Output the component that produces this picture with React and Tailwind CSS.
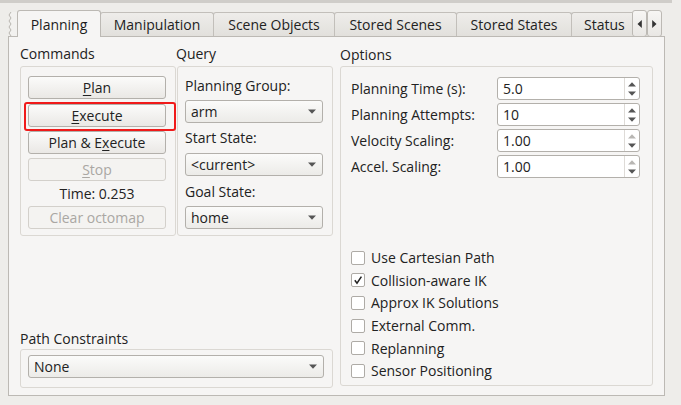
import React from "react";

const Btn = ({ children, disabled, className = "" }) => (
  <div
    className={`h-[23px] w-[138px] flex items-center justify-center rounded-[3px] border text-[14px] ${
      disabled
        ? "border-[#d3d0cb] bg-[#f4f3f1] text-[#aaa7a3]"
        : "border-[#b3b0ab] bg-gradient-to-b from-[#fbfbfa] to-[#eae8e5] text-[#222]"
    } ${className}`}
  >
    {children}
  </div>
);

const Arrow = ({ color = "#555" }) => (
  <svg width="8" height="5" viewBox="0 0 8 5">
    <path d="M0 0.5 H8 L4 4.8 Z" fill={color} />
  </svg>
);

const Combo = ({ value, className = "" }) => (
  <div
    className={`h-[23px] flex items-center justify-between rounded-[3px] border border-[#b3b0ab] bg-gradient-to-b from-[#fbfbfa] to-[#ecebe8] pl-[5px] pr-[6px] text-[14px] text-[#222] ${className}`}
  >
    <span>{value}</span>
    <Arrow />
  </div>
);

const Spin = ({ value, upDisabled }) => (
  <div className="h-[23px] w-[143px] flex rounded-[3px] border border-[#b3b0ab] bg-white">
    <div className="flex-1 pl-[5px] flex items-center text-[14px] text-[#222]">{value}</div>
    <div className="w-[15px] border-l border-[#dedbd7] flex flex-col items-center justify-center gap-[4px]">
      <svg width="8" height="5" viewBox="0 0 8 5">
        <path d="M0 4.5 H8 L4 0.2 Z" fill={upDisabled ? "#b8b6b3" : "#555"} />
      </svg>
      <svg width="8" height="5" viewBox="0 0 8 5">
        <path d="M0 0.5 H8 L4 4.8 Z" fill="#555" />
      </svg>
    </div>
  </div>
);

const Check = ({ label, checked }) => (
  <div className="h-[22.6px] flex items-center gap-[6px]">
    <div className="w-[14px] h-[14px] rounded-[2px] border border-[#aeaba6] bg-white flex items-center justify-center">
      {checked && (
        <svg width="10" height="10" viewBox="0 0 10 10">
          <path d="M1.8 5.2 L4 8.2 L8.4 1.6" stroke="#222" strokeWidth="1.5" fill="none" />
        </svg>
      )}
    </div>
    <span className="text-[14px] text-[#222]">{label}</span>
  </div>
);

const Tab = ({ children, w }) => (
  <div
    className={`${w} h-[24px] -ml-px flex items-center justify-center border border-b-0 border-[#c2bfba] rounded-t-[3px] bg-gradient-to-b from-[#eeedea] to-[#e2e0dc] text-[14px] text-[#222]`}
  >
    {children}
  </div>
);

export default function App() {
  return (
    <div className="w-[681px] h-[405px] bg-[#eeedea] overflow-hidden font-['Open_Sans',sans-serif] text-[#222] relative">
      <div className="h-[3px] w-[672px] bg-[#cfcdc9]" />
      <div className="h-[7px]" />
      {/* tab bar */}
      <div className="ml-[8px] h-[26px] flex items-end">
        <div className="w-[9px] h-[26px] flex items-end">
          <svg width="9" height="26" viewBox="0 0 9 26">
            <path d="M3 2 L1 5 L3 8 L1 11 L3 14 L1 17 L3 20 L1 23 L3 26 L9 26 L9 2 Z" fill="#f2f1ef" />
            <polyline points="3,2 1,5 3,8 1,11 3,14 1,17 3,20 1,23 3,26" stroke="#b9b6b1" strokeWidth="1" fill="none" />
          </svg>
        </div>
        <div className="relative z-10 w-[84px] h-[27px] -mb-px flex items-center justify-center border border-b-0 border-[#bcb9b4] rounded-t-[3px] bg-[#f6f5f4] text-[14px] text-[#1c1c1c]">
          Planning
        </div>
        <Tab w="w-[114px]">Manipulation</Tab>
        <Tab w="w-[122px]">Scene Objects</Tab>
        <Tab w="w-[123px]">Stored Scenes</Tab>
        <Tab w="w-[116px]">Stored States</Tab>
        <div className="w-[61px] h-[24px] -ml-px flex items-center pl-[12px] border-l border-t border-[#c2bfba] rounded-tl-[3px] bg-gradient-to-b from-[#eeedea] to-[#e2e0dc] text-[14px] text-[#222] overflow-hidden whitespace-nowrap">
          Status
        </div>
        <div className="self-start h-[27px] flex">
          <div className="w-[15px] h-[27px] flex items-center justify-center border border-[#bcb9b4] rounded-[3px] bg-gradient-to-b from-[#f7f6f4] to-[#e9e7e4]">
            <svg width="5" height="8" viewBox="0 0 5 8"><path d="M4.8 0 V8 L0.5 4 Z" fill="#333" /></svg>
          </div>
          <div className="w-[15px] h-[27px] flex items-center justify-center border border-[#bcb9b4] rounded-[3px] bg-gradient-to-b from-[#f7f6f4] to-[#e9e7e4]">
            <svg width="5" height="8" viewBox="0 0 5 8"><path d="M0.2 0 V8 L4.5 4 Z" fill="#333" /></svg>
          </div>
        </div>
      </div>

      {/* panel */}
      <div className="ml-[8px] w-[657px] h-[360px] border border-[#bcb9b4] bg-[#f6f5f4] pl-[11px] pt-[7px] flex gap-[7px]">
        {/* left column */}
        <div className="w-[313px] flex flex-col">
          <div className="flex gap-[1px]">
            <div className="w-[156px] flex flex-col">
              <div className="h-[20px] leading-[20px] text-[14px]">Commands</div>
              <div className="mt-[2px] h-[170px] border border-[#dbd8d3] rounded-[3px] pl-[7px] pt-[9px] flex flex-col">
                <Btn>
                  <span className="underline underline-offset-2">P</span>lan
                </Btn>
                <Btn className="mt-[5px]">
                  <span className="underline underline-offset-2">E</span>xecute
                </Btn>
                <Btn className="mt-[4px]">
                  Plan &amp; E<span className="underline underline-offset-2">x</span>ecute
                </Btn>
                <Btn className="mt-[4px]" disabled>
                  <span className="underline underline-offset-2">S</span>top
                </Btn>
                <div className="w-[138px] h-[25px] flex items-center justify-center text-[14px]">Time: 0.253</div>
                <Btn disabled>Clear octomap</Btn>
              </div>
            </div>
            <div className="w-[156px] flex flex-col">
              <div className="h-[20px] leading-[20px] text-[14px] -ml-px">Query</div>
              <div className="mt-[2px] h-[170px] border border-[#dbd8d3] rounded-[3px] pl-[7px] pt-[9px] flex flex-col">
                <div className="h-[20px] leading-[20px] text-[14px]">Planning Group:</div>
                <Combo value="arm" className="mt-[4px] w-[138px]" />
                <div className="mt-[5px] h-[20px] leading-[20px] text-[14px]">Start State:</div>
                <Combo value="<current>" className="mt-[5px] w-[138px]" />
                <div className="mt-[6px] h-[20px] leading-[20px] text-[14px]">Goal State:</div>
                <Combo value="home" className="mt-[4px] w-[138px]" />
              </div>
            </div>
          </div>
          <div className="mt-[94px] h-[18px] leading-[18px] text-[14px]">Path Constraints</div>
          <div className="mt-[1px] h-[39px] border border-[#dbd8d3] rounded-[3px] pl-[7px] pt-[5px]">
            <Combo value="None" className="w-[296px]" />
          </div>
        </div>

        {/* right column */}
        <div className="w-[313px] flex flex-col">
          <div className="h-[20px] leading-[20px] text-[14px] mt-[1px]">Options</div>
          <div className="mt-[1px] h-[320px] border border-[#dbd8d3] rounded-[3px] pl-[10px] pt-[10px] pb-[3px] flex flex-col">
            <div className="flex flex-col gap-[3px]">
              {[
                ["Planning Time (s):", "5.0", false],
                ["Planning Attempts:", "10", false],
                ["Velocity Scaling:", "1.00", true],
                ["Accel. Scaling:", "1.00", true],
              ].map(([l, v, d]) => (
                <div key={l} className="flex items-center">
                  <div className="w-[146px] text-[14px]">{l}</div>
                  <Spin value={v} upDisabled={d} />
                </div>
              ))}
            </div>
            <div className="mt-auto flex flex-col">
              <Check label="Use Cartesian Path" />
              <Check label="Collision-aware IK" checked />
              <Check label="Approx IK Solutions" />
              <Check label="External Comm." />
              <Check label="Replanning" />
              <Check label="Sensor Positioning" />
            </div>
          </div>
        </div>
      </div>

      {/* red annotation box */}
      <div className="absolute left-[24px] top-[102px] w-[152px] h-[29px] border-2 border-[#f01a1a] rounded-[3px]" />
    </div>
  );
}
